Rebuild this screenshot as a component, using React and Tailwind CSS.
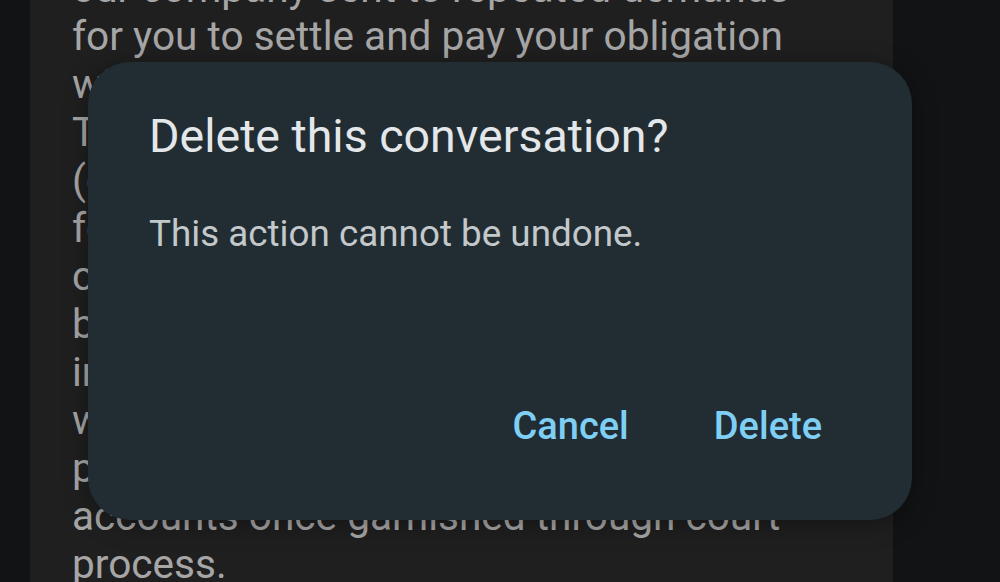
export default function App() {
  const lines = [
    "our company sent to repeated demands",
    "for you to settle and pay your obligation",
    "within the given period.",
    "This may result in legal action",
    "(civil case) being filed against you",
    "for collection of the amount due,",
    "cost of suit and attorney's fees,",
    "besides freezing of your bank",
    "in all banks and other institutions",
    "which will be garnished and your",
    "properties and payroll, including",
    "accounts once garnished through court",
    "process.",
  ];
  return (
    <div
      className="relative w-[1000px] h-[582px] overflow-hidden bg-[#121314]"
      style={{ fontFamily: "Roboto, 'Liberation Sans', sans-serif" }}
    >
      <div className="ml-[30px] w-[863px] h-full overflow-hidden bg-[#1f1f20] pl-[42px]">
        <div className="-mt-[36px] text-[40.6px] leading-[48px] text-[#a6a6a7] whitespace-nowrap">
          {lines.map((l, i) => (
            <div key={i}>{l}</div>
          ))}
        </div>
      </div>
      <div className="absolute left-[88px] top-[62px] w-[824px] h-[458px] rounded-[42px] bg-[#222d33] shadow-[0_4px_24px_rgba(0,0,0,0.35)] flex flex-col pl-[61px] pr-[90px]">
        <div className="mt-[46px] text-[46.5px] leading-[56px] text-[#e4e7e9] whitespace-nowrap">
          Delete this conversation?
        </div>
        <div className="mt-[46px] text-[36.8px] leading-[48px] text-[#c3c8cb] whitespace-nowrap">
          This action cannot be undone.
        </div>
        <div className="mt-auto mb-[70px] flex justify-end gap-[85px] text-[38px] leading-[48px] font-medium text-[#7fcff5]">
          <span>Cancel</span>
          <span>Delete</span>
        </div>
      </div>
    </div>
  );
}
